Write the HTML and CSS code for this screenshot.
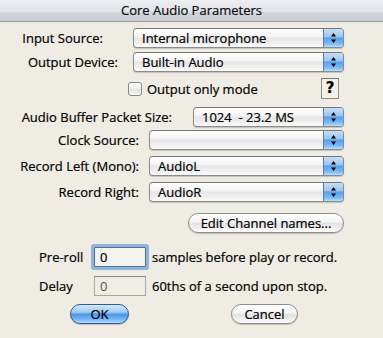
FILE: index.html
```
<!DOCTYPE html>
<html lang="en">
<head>
    <meta charset="UTF-8">
    <title>Core Audio Parameters</title>
    <link rel="stylesheet" href="styles.css">
</head>
<body>
<div class="dialog">
    <div class="titlebar">Core Audio Parameters</div>

    <div class="row row-input">
        <label class="lbl lbl-input">Input Source:</label>
        <div class="popup popup-device">
            <span class="popup-text">Internal microphone</span>
            <span class="popup-arrows"><svg width="19" height="18" viewBox="0 0 19 18"><path d="M7 7.5h5L9.5 4z M7 10.5h5L9.5 14z" fill="#000"/></svg></span>
        </div>
    </div>

    <div class="row row-output">
        <label class="lbl lbl-output">Output Device:</label>
        <div class="popup popup-device">
            <span class="popup-text">Built-in Audio</span>
            <span class="popup-arrows"><svg width="19" height="18" viewBox="0 0 19 18"><path d="M7 7.5h5L9.5 4z M7 10.5h5L9.5 14z" fill="#000"/></svg></span>
        </div>
    </div>

    <div class="row row-check">
        <span class="checkbox"></span>
        <span class="check-text">Output only mode</span>
        <span class="help">?</span>
    </div>

    <div class="row row-buffer">
        <label class="lbl lbl-buffer">Audio Buffer Packet Size:</label>
        <div class="popup popup-buffer">
            <span class="popup-text">1024  - 23.2 MS</span>
            <span class="popup-arrows"><svg width="19" height="18" viewBox="0 0 19 18"><path d="M7 7.5h5L9.5 4z M7 10.5h5L9.5 14z" fill="#000"/></svg></span>
        </div>
    </div>

    <div class="row row-clock">
        <label class="lbl lbl-chan">Clock Source:</label>
        <div class="popup popup-chan">
            <span class="popup-text"></span>
            <span class="popup-arrows"><svg width="19" height="18" viewBox="0 0 19 18"><path d="M7 7.5h5L9.5 4z M7 10.5h5L9.5 14z" fill="#000"/></svg></span>
        </div>
    </div>

    <div class="row row-rec">
        <label class="lbl lbl-chan">Record Left (Mono):</label>
        <div class="popup popup-chan">
            <span class="popup-text">AudioL</span>
            <span class="popup-arrows"><svg width="19" height="18" viewBox="0 0 19 18"><path d="M7 7.5h5L9.5 4z M7 10.5h5L9.5 14z" fill="#000"/></svg></span>
        </div>
    </div>

    <div class="row row-rec">
        <label class="lbl lbl-chan">Record Right:</label>
        <div class="popup popup-chan">
            <span class="popup-text">AudioR</span>
            <span class="popup-arrows"><svg width="19" height="18" viewBox="0 0 19 18"><path d="M7 7.5h5L9.5 4z M7 10.5h5L9.5 14z" fill="#000"/></svg></span>
        </div>
    </div>

    <div class="row row-edit">
        <button class="btn btn-edit">Edit Channel names...</button>
    </div>

    <div class="row row-preroll">
        <label class="lbl-field">Pre-roll</label>
        <span class="field field-focus">0</span>
        <span class="field-note">samples before play or record.</span>
    </div>

    <div class="row row-delay">
        <label class="lbl-field">Delay</label>
        <span class="field field-dim">0</span>
        <span class="field-note">60ths of a second upon stop.</span>
    </div>

    <div class="row row-buttons">
        <button class="btn btn-ok">OK</button>
        <button class="btn btn-cancel">Cancel</button>
    </div>
</div>
</body>
</html>
```

FILE: styles.css
```
html, body {
    margin: 0;
    padding: 0;
}
body {
    font-family: 'Open Sans', 'DejaVu Sans', sans-serif;
    font-size: 13px;
    color: #000;
    background-color: #eeece3;
    -webkit-text-stroke: 0.2px #000;
}
.dialog {
    width: 383px;
    height: 338px;
    background-color: #eeece3;
}
.titlebar {
    height: 21px;
    line-height: 21px;
    text-align: center;
    color: #111;
    border-bottom: 1px solid #9a9c9f;
    background: linear-gradient(#eceef2, #e2e4e9 55%, #cdd3d9 62%, #c9cfd6);
}
.row {
    display: flex;
    align-items: center;
    height: 20px;
    line-height: 16px;
}
.row-input { margin-top: 6px; }
.row-output { margin-top: 4px; }
.row-check { margin-top: 6px; height: 21px; }
.row-buffer { margin-top: 8px; }
.row-clock { margin-top: 3px; }
.row-rec { margin-top: 6px; }
.row-edit { margin-top: 11px; }
.row-preroll { margin-top: 13px; height: 22px; }
.row-delay { margin-top: 8px; }
.row-buttons { margin-top: 8px; }

.lbl {
    text-align: right;
    flex: none;
}
.lbl-input { width: 103px; margin-right: 30px; }
.lbl-output { width: 118px; margin-right: 15px; }
.lbl-buffer { width: 172px; margin-right: 21px; }
.lbl-chan { width: 139px; margin-right: 10px; }

.popup {
    display: flex;
    box-sizing: border-box;
    height: 20px;
    border: 1px solid #8b8b8b;
    border-top-color: #777;
    border-radius: 4px;
    background: linear-gradient(#ffffff, #f5f5f5 40%, #e6e6e6 52%, #eeeeee 75%, #fbfbfb);
    box-shadow: 0 1px 1px rgba(0, 0, 0, 0.18);
    overflow: hidden;
}
.popup-device { width: 211px; }
.popup-buffer { width: 151px; }
.popup-chan { width: 195px; }
.popup-text {
    flex: 1;
    padding-left: 8px;
    line-height: 18px;
    white-space: pre;
}
.popup-arrows {
    width: 19px;
    border-left: 1px solid #4f7fbf;
    background: linear-gradient(#c6dff6, #9cc6f0 42%, #5b9fea 50%, #78b8f6 80%, #b6defd);
    -webkit-text-stroke: 0;
}
.popup-arrows svg {
    display: block;
}

.checkbox {
    box-sizing: border-box;
    width: 14px;
    height: 14px;
    margin-left: 128px;
    border: 1px solid #888;
    border-radius: 3px;
    background: linear-gradient(#ffffff, #eeeeee 50%, #e2e2e2 55%, #f8f8f8);
}
.check-text {
    margin-left: 5px;
}
.help {
    box-sizing: border-box;
    width: 18px;
    height: 21px;
    margin-left: auto;
    margin-right: 44px;
    border: 1px solid #8c8c8c;
    border-top-color: #7a7a7a;
    background-color: #f2f0e9;
    text-align: center;
    font-family: 'DejaVu Sans', sans-serif;
    font-weight: bold;
    font-size: 15px;
    line-height: 19px;
}

.btn {
    font-family: 'Open Sans', 'DejaVu Sans', sans-serif;
    font-size: 13px;
    height: 20px;
    padding: 0;
    line-height: 17px;
    border-radius: 10px;
    border: 1px solid #8e8e8e;
    color: #000;
    -webkit-text-stroke: 0.2px #000;
    background: linear-gradient(#ffffff, #f4f4f4 45%, #e3e3e3 52%, #ededed 75%, #ffffff);
    box-shadow: 0 1px 1px rgba(0, 0, 0, 0.2);
}
.btn-edit {
    width: 156px;
    margin-left: 188px;
}
.btn-ok {
    width: 59px;
    margin-left: 70px;
    border-color: #34599a;
    background: linear-gradient(#d2e8fb, #9fcaf2 40%, #4e97e4 52%, #71b5f2 78%, #b2dcfd);
}
.btn-cancel {
    width: 67px;
    margin-left: 102px;
}

.lbl-field {
    width: 55px;
    margin-left: 39px;
    flex: none;
}
.field {
    box-sizing: border-box;
    width: 52px;
    height: 20px;
    padding-left: 5px;
    line-height: 18px;
    background-color: #f4f3ee;
    border: 1px solid #a5a5a5;
    border-top-color: #8a8a8a;
}
.field-focus {
    border-color: #55719a;
    box-shadow: 0 0 0 3px #91b4de;
    border-radius: 1px;
}
.field-dim {
    color: #555;
    -webkit-text-stroke: 0;
    background-color: #efede6;
}
.field-note {
    margin-left: 6px;
}
```
